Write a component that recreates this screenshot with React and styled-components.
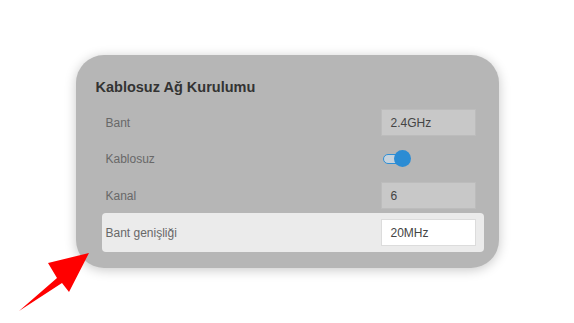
import React from "react";
import styled, { createGlobalStyle } from "styled-components";

const GlobalStyle = createGlobalStyle`
  html, body {
    margin: 0;
    padding: 0;
    background: #ffffff;
  }
  body {
    font-family: "Liberation Sans", Arial, sans-serif;
  }
`;

const rows = [
  { label: "Bant", type: "input", value: "2.4GHz" },
  { label: "Kablosuz", type: "toggle" },
  { label: "Kanal", type: "input", value: "6" },
  { label: "Bant genişliği", type: "input", value: "20MHz", active: true },
];

const App = () => {
  return (
    <>
      <GlobalStyle />
      <Page>
        <Card>
          <Title>Kablosuz Ağ Kurulumu</Title>
          <Rows>
            {rows.map((row) => (
              <Row key={row.label} $active={row.active} $toggle={row.type === "toggle"}>
                <Label>{row.label}</Label>
                {row.type === "toggle" ? (
                  <Toggle>
                    <Track />
                    <Knob />
                  </Toggle>
                ) : (
                  <Field $active={row.active}>{row.value}</Field>
                )}
              </Row>
            ))}
          </Rows>
        </Card>
        <Arrow width="100" height="70" viewBox="0 0 100 70">
          <polygon
            points="19,61 57,28 48,13 89,3 69,42 62,33"
            fill="#ff0000"
          />
        </Arrow>
      </Page>
    </>
  );
};

export default App;

const Page = styled.div`
  position: relative;
  width: 574px;
  height: 323px;
  display: flex;
  align-items: center;
  justify-content: center;
`;

const Card = styled.div`
  width: 423px;
  height: 213px;
  box-sizing: border-box;
  background: #b6b6b6;
  border-radius: 28px;
  box-shadow: 0 2px 12px rgba(0, 0, 0, 0.22);
  padding: 24px 15px 16px 20px;
  display: flex;
  flex-direction: column;
`;

const Title = styled.h2`
  margin: 0 0 9px;
  font-size: 14.5px;
  line-height: 16px;
  font-weight: 700;
  color: #333333;
`;

const Rows = styled.div`
  display: flex;
  flex-direction: column;
  margin-left: 6px;
`;

const Row = styled.div`
  display: flex;
  align-items: center;
  justify-content: space-between;
  height: ${(p) => (p.$active ? "39px" : p.$toggle ? "36px" : "37px")};
  margin-top: ${(p) => (p.$active ? "-1px" : "0")};
  padding: 0 8px 0 4px;
  box-sizing: border-box;
  border-radius: 4px;
  background: ${(p) => (p.$active ? "#ebebeb" : "transparent")};
`;

const Label = styled.span`
  font-size: 12px;
  color: #686868;
`;

const Field = styled.div`
  width: 95px;
  height: 27px;
  box-sizing: border-box;
  display: flex;
  align-items: center;
  padding-left: 9px;
  font-size: 12px;
  color: #444444;
  background: ${(p) => (p.$active ? "#ffffff" : "#c8c8c8")};
  border: 1px solid ${(p) => (p.$active ? "#dcdcdc" : "#bcbcbc")};
`;

const Toggle = styled.div`
  position: relative;
  width: 95px;
  height: 18px;
`;

const Track = styled.div`
  position: absolute;
  left: 2px;
  top: 4px;
  width: 20px;
  height: 10px;
  box-sizing: border-box;
  border: 1.5px solid #2e8fd6;
  border-radius: 6px;
  background: #c6d2dc;
`;

const Knob = styled.div`
  position: absolute;
  left: 13px;
  top: 0;
  width: 17px;
  height: 17px;
  border-radius: 50%;
  background: #2b8cd4;
`;

const Arrow = styled.svg`
  position: absolute;
  left: 0;
  top: 250px;
`;
